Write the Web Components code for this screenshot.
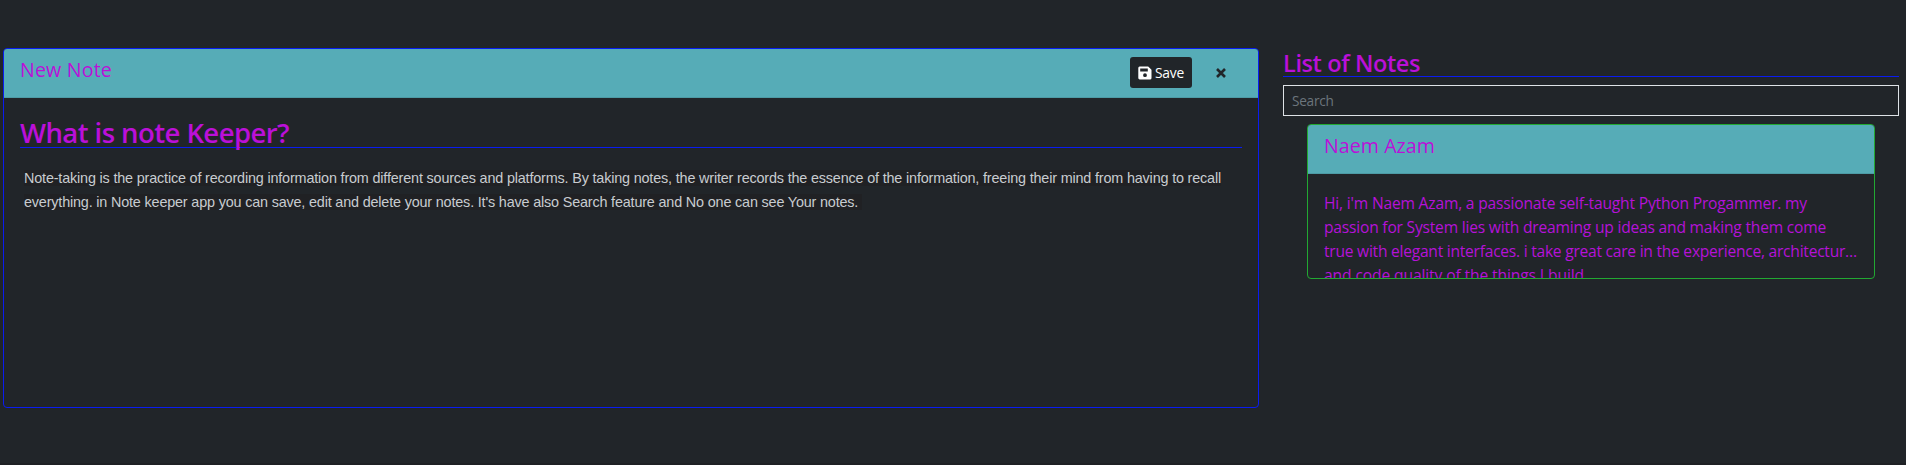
<!DOCTYPE html>
<html lang="en">
<head>
<meta charset="utf-8">
<title>Note Keeper</title>
<style>
html,body{margin:0;height:100%;background:#212529}
body{font-family:"Open Sans","Noto Sans",sans-serif;overflow:hidden}
</style>
</head>
<body>
<note-app></note-app>
<script>
const define=(name,html,init)=>customElements.define(name,class extends HTMLElement{
  constructor(){super();this.attachShadow({mode:'open'}).innerHTML=html}
  connectedCallback(){if(init)init(this)}
});

// A single line of text whose tracking is adjusted to fill its `w` attribute.
define('fit-line','<style>:host{display:block;width:max-content;white-space:pre}</style><span><slot></slot></span>',el=>{
  const n=el.textContent.length;
  const natural=el.getBoundingClientRect().width;
  if(el.getAttribute('w')&&natural)el.style.letterSpacing=((+el.getAttribute('w')-natural)/n)+'px';
});

define('note-card',`<style>
:host{display:flex;flex-direction:column;box-sizing:border-box;border:1px solid var(--edge);border-radius:4px;overflow:hidden}
header{box-sizing:border-box;height:49px;flex:none;background:#56acb7;border-bottom:1px solid #4d9ba5;display:flex;justify-content:space-between;padding:8px 16px 0 16px;font-size:19.6px;line-height:26px;color:#bb10d8}
</style><header><slot name="title"></slot><slot name="actions"></slot></header><slot></slot>`);

define('save-button',`<style>
:host{display:flex;box-sizing:border-box;width:62px;height:31px;border-radius:3px;background:#212529;color:#fff;font-size:13.8px;font-weight:500;line-height:31px;padding-left:8px;gap:3px;align-items:center}
svg{display:block;width:14px;height:14px;margin-top:1px}
</style><svg viewBox="0 0 14 14"><path fill="#fff" fill-rule="evenodd" d="M1.6.6h8.6L13.5 3.8v8.1a1.5 1.5 0 0 1-1.5 1.5H1.7a1.4 1.4 0 0 1-1.4-1.4V2A1.4 1.4 0 0 1 1.6.6ZM2.2 2.4v3h7.6v-3ZM7 7.3a1.9 1.9 0 1 0 0 3.8 1.9 1.9 0 0 0 0-3.8Z"/></svg><fit-line w="29">Save</fit-line>`);

define('close-button',`<style>:host{display:block;width:10px;height:10px}svg{display:block}</style>
<svg width="10" height="10" viewBox="0 0 10 10"><path d="M1 1 9 9M9 1 1 9" stroke="#212529" stroke-width="2.6"/></svg>`);

define('section-title',`<style>:host{display:block;box-sizing:border-box;color:#bb10d8;font-weight:650;border-bottom:1px solid #0a1cf0}</style><slot></slot>`);

define('search-box',`<style>:host{display:block}
input{display:block;box-sizing:border-box;width:100%;height:31px;border:1px solid #dee2e6;border-radius:0;background:#212529;padding:0 8px;font:13.6px "Open Sans",sans-serif;letter-spacing:-.25px;color:#dee2e6;outline:0}
input::placeholder{color:#6c757d;opacity:1}</style><input type="text" placeholder="Search">`);

define('note-app',`<style>
:host{display:grid;grid-template-columns:1256px 616px;column-gap:24px;align-items:start;box-sizing:border-box;height:465px;padding:48px 0 0 3px;border-bottom:2px solid #1e2024}
.main{height:360px;--edge:#0a1cf0}
.actions{display:flex;align-items:flex-start;gap:24px;padding-right:16px}
close-button{margin-top:11px}
.h1{margin:19px 16px 0;height:31px;font-size:27.5px;line-height:31px}
.copy{margin:18px 20px 0;font:14.4px/24px "Liberation Sans",Arial,sans-serif;color:#c8ccd0}
.copy fit-line{background:#202124;line-height:16px;margin:4px 0 8px}
.h2{height:29px;font-size:23.5px;line-height:30px}
search-box{margin-top:8px}
.item{margin:8px 24px 0;height:155px;--edge:#22a832}
.text{padding:17px 16px;font-size:15.6px;line-height:24px;color:#b512d8}
</style>
<note-card class="main"><fit-line slot="title" w="92">New Note</fit-line>
<div class="actions" slot="actions"><save-button></save-button><close-button></close-button></div>
<section-title class="h1"><fit-line w="269">What is note Keeper?</fit-line></section-title>
<div class="copy"><fit-line w="1197">Note-taking is the practice of recording information from different sources and platforms. By taking notes, the writer records the essence of the information, freeing their mind from having to recall</fit-line><fit-line w="838">everything. in Note keeper app you can save, edit and delete your notes. It's have also Search feature and No one can see Your notes. </fit-line></div>
</note-card>
<aside>
<section-title class="h2"><fit-line w="137">List of Notes</fit-line></section-title>
<search-box></search-box>
<note-card class="item"><fit-line slot="title" w="111">Naem Azam</fit-line>
<div class="text"><fit-line w="483">Hi, i'm Naem Azam, a passionate self-taught Python Progammer. my</fit-line><fit-line w="502">passion for System lies with dreaming up ideas and making them come</fit-line><fit-line w="533">true with elegant interfaces. i take great care in the experience, architectur…</fit-line><fit-line w="264">and code quality of the things I build.</fit-line></div>
</note-card>
</aside>`);
</script>
</body>
</html>
